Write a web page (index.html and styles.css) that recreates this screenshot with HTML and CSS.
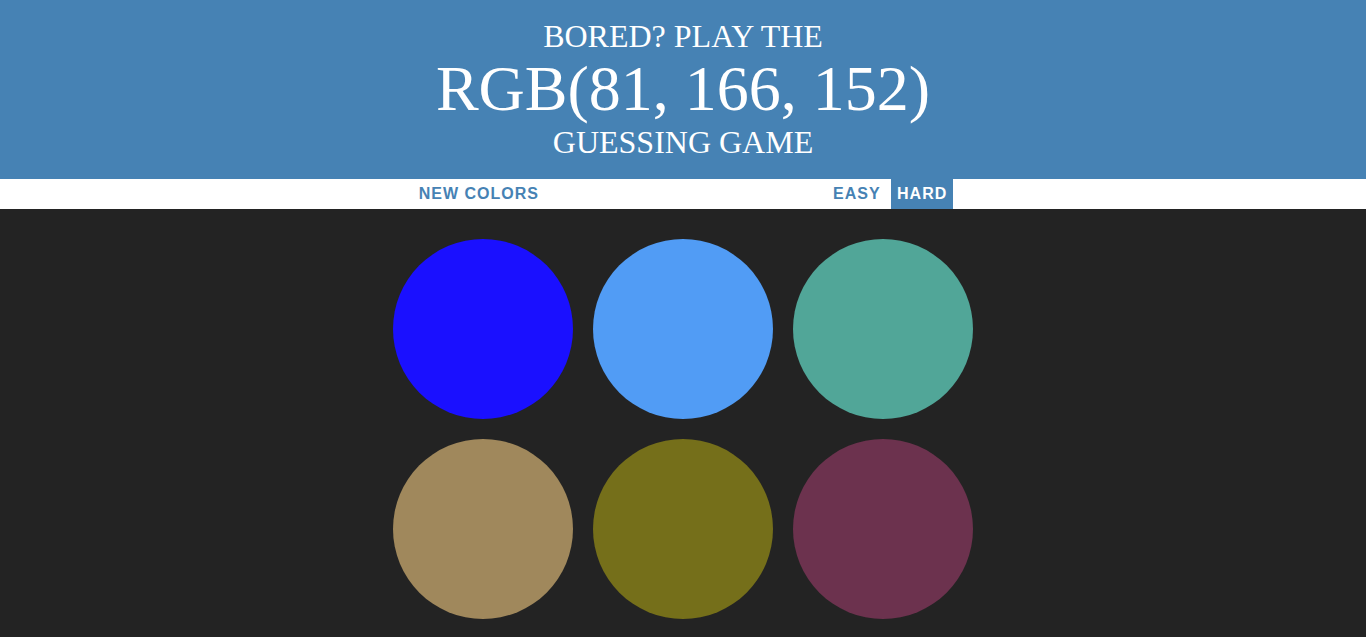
FILE: index.html
```html
<!DOCTYPE html>
<html>
<head>
<meta charset="utf-8">
<title>Color Game</title>
<link rel="stylesheet" href="styles.css">
</head>
<body>
<h1 class="title">Bored? Play the<br><span class="color-display">RGB(81, 166, 152)</span><br>Guessing Game</h1>
<div class="stripe">
  <button class="btn">New Colors</button>
  <span class="message"></span>
  <button class="btn">Easy</button>
  <button class="btn selected">Hard</button>
</div>
<div class="container">
  <div class="square" style="background: rgb(26, 16, 255)"></div>
  <div class="square" style="background: rgb(81, 156, 245)"></div>
  <div class="square" style="background: rgb(81, 166, 152)"></div>
  <div class="square" style="background: rgb(160, 136, 92)"></div>
  <div class="square" style="background: rgb(117, 111, 26)"></div>
  <div class="square" style="background: rgb(108, 50, 78)"></div>
</div>
</body>
</html>
```
FILE: styles.css
```css
html, body {
  margin: 0;
  padding: 0;
}
body {
  background: #232323;
  font-family: "Liberation Sans", Arial, sans-serif;
}
.title {
  margin: 0;
  padding: 19px 0 19px;
  background: steelblue;
  color: #fff;
  text-align: center;
  text-transform: uppercase;
  font-family: "Liberation Serif", "Times New Roman", serif;
  font-weight: normal;
  font-size: 32px;
  line-height: 1.1;
}
.color-display {
  font-size: 200%;
}
.stripe {
  background: #fff;
  height: 30px;
  text-align: center;
  font-size: 16px;
}
.btn {
  border: none;
  background: none;
  text-transform: uppercase;
  height: 100%;
  font-family: "Liberation Sans", Arial, sans-serif;
  font-weight: 700;
  font-size: inherit;
  color: steelblue;
  letter-spacing: 1px;
  padding: 1px 6px;
  margin: 0;
  outline: none;
}
.selected {
  color: #fff;
  background: steelblue;
}
.message {
  display: inline-block;
  width: 20%;
}
.container {
  max-width: 600px;
  margin: 20px auto 0;
  display: flex;
  flex-wrap: wrap;
}
.square {
  width: 30%;
  padding-bottom: 30%;
  margin: 1.66%;
  border-radius: 50%;
}
```
